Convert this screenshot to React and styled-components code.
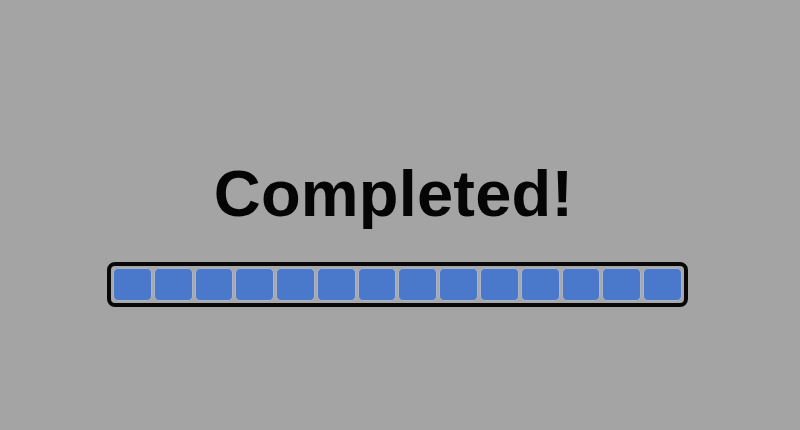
import React from 'react';
import styled, { createGlobalStyle } from 'styled-components';

const GlobalStyle = createGlobalStyle`
  html, body {
    margin: 0;
    padding: 0;
    background: #a4a4a4;
  }
  body {
    font-family: "Liberation Sans", Arial, sans-serif;
  }
`;

const Screen = styled.div`
  width: 800px;
  height: 430px;
  background: #a4a4a4;
  display: flex;
  flex-direction: column;
  align-items: center;
  padding-top: 162px;
  padding-right: 5px;
  box-sizing: border-box;
`;

const Title = styled.h1`
  margin: 0 0 36px -8px;
  font-family: "Liberation Sans", Arial, sans-serif;
  font-weight: 700;
  font-size: 65px;
  line-height: 64px;
  letter-spacing: 0.2px;
  color: #050505;
`;

const Bar = styled.div`
  width: 581px;
  height: 45px;
  box-sizing: border-box;
  border: 4px solid #080808;
  border-radius: 8px;
  background: #a8a8a8;
  padding: 2px;
  display: flex;
  gap: 2px;
`;

const Segment = styled.div`
  flex: 1;
  box-sizing: border-box;
  border: 1px solid #aab4c8;
  border-radius: 5px;
  background: ${props => (props.filled ? '#4a78cb' : 'transparent')};
`;

const SEGMENTS = 14;

const App = () => {
  const filled = 14;

  return (
    <>
      <GlobalStyle />
      <Screen>
        <Title>Completed!</Title>
        <Bar>
          {Array.from({ length: SEGMENTS }, (_, i) => (
            <Segment key={i} filled={i < filled} />
          ))}
        </Bar>
      </Screen>
    </>
  );
};

export default App;
